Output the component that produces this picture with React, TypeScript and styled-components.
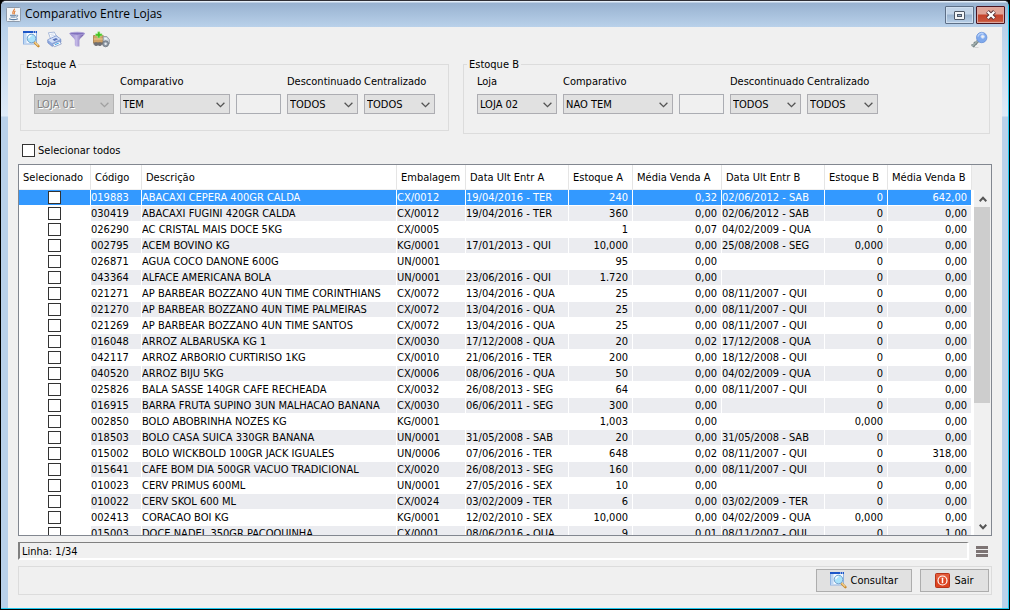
import React, { useId, useState } from 'react';
import styled, { createGlobalStyle, css } from 'styled-components';

const GlobalStyle = createGlobalStyle`
  *, *::before, *::after { box-sizing: border-box; }
  body {
    margin: 0;
    background: #000;
    font-family: "Tahoma", "DejaVu Sans Condensed", "Noto Sans", sans-serif;
    font-size: 11px;
    line-height: 13px;
    color: #000;
  }
  button, input, select { font: inherit; color: inherit; }
`;

const Window = styled.div`
  display: flex;
  flex-direction: column;
  height: 100vh;
  min-height: 400px;
  padding: 0 7px;
  border: 1px solid #000;
  border-top-color: #2f2f35;
  border-radius: 6px 6px 0 0;
  background: linear-gradient(#b9d1ea 27px, #dfebf8 115px, #b9d1ea 116px);
  box-shadow: inset -1px -1px 0 #1fc8ee;
  overflow: hidden;
`;

const TitleBar = styled.header`
  display: flex;
  align-items: flex-start;
  justify-content: space-between;
  height: 26px;
  flex: none;
  margin: 0 -6px 0 -7px;
  padding: 5px 3px 0 5px;
  background: linear-gradient(#e4eef8 1px, #98b2d0 2px, #b9d1ea 26px);
`;

const Title = styled.h1`
  display: flex;
  align-items: center;
  gap: 4px;
  margin: 0;
  font: 400 12px/16px "Open Sans", "Segoe UI", sans-serif;
`;

const WindowButtons = styled.div`
  display: flex;
  gap: 2px;
`;

const WindowButton = styled.button<{ $close?: boolean }>`
  display: grid;
  place-items: center;
  width: 29px;
  height: 18px;
  padding: 0;
  border: 1px solid ${p => (p.$close ? '#4b1420' : '#5d6f87')};
  border-radius: 1px;
  box-shadow: inset 0 0 0 1px ${p => (p.$close ? '#dda79f' : '#cfdff0')};
  background: ${p =>
    p.$close
      ? 'linear-gradient(#e0a396 0 7px, #c5432c 8px, #c8533b 14px, #d98a6c)'
      : 'linear-gradient(#c2d4e8 0 7px, #9ab3cf 8px, #b8cfe8)'};
`;

const Content = styled.main`
  display: flex;
  flex-direction: column;
  flex: 1;
  min-height: 0;
  margin-bottom: 1px;
  padding: 0 10px 13px;
  background: #f0f0f0;
`;

const Toolbar = styled.div`
  display: flex;
  align-items: flex-start;
  height: 31px;
  flex: none;
  gap: 7px;
  padding: 4px 4px 0 5px;
`;

const ToolButton = styled.button<{ $end?: boolean }>`
  display: block;
  padding: 0;
  border: 0;
  background: none;
  ${p => p.$end && css`margin-left: auto;`}
  svg { display: block; }
`;

const Filters = styled.div`
  display: flex;
  align-items: flex-start;
  gap: 14px;
  padding: 0 2px;
`;

const Group = styled.fieldset<{ $fill?: boolean }>`
  flex: ${p => (p.$fill ? '1' : 'none')};
  min-width: 0;
  margin: 0;
  padding: 4px 13px ${p => (p.$fill ? 19 : 16)}px;
  border: 1px solid #dcdcdc;
`;

const Legend = styled.legend`
  margin-left: -10px;
  padding: 0 2px;
`;

const Fields = styled.div`
  display: flex;
  align-items: flex-end;
  gap: 6px;
`;

const Field = styled.div<{ $width: number }>`
  display: flex;
  flex-direction: column;
  gap: 6px;
  width: ${p => p.$width}px;
`;

const FieldLabel = styled.label<{ $indent?: boolean }>`
  padding-left: ${p => (p.$indent ? 2 : 0)}px;
  white-space: nowrap;
`;

const SelectBox = styled.div`
  position: relative;
  svg {
    position: absolute;
    right: 5px;
    top: 8px;
    pointer-events: none;
  }
`;

const Select = styled.select`
  display: block;
  appearance: none;
  width: 100%;
  height: 20px;
  padding: 0 16px 0 2px;
  border: 1px solid #adadb2;
  border-radius: 0;
  background: #e1e1e1;
  &:disabled {
    border-color: #b4b4b4;
    background: #cccccc;
    color: #838383;
    text-shadow: 1px 1px 0 #fff;
    opacity: 1;
  }
`;

const TextInput = styled.input`
  width: 45px;
  height: 20px;
  padding: 0 2px;
  border: 1px solid #abadb3;
  background: #f0f0f0;
`;

const CheckBox = styled.input.attrs({ type: 'checkbox' })`
  appearance: none;
  display: block;
  width: 13px;
  height: 13px;
  margin: 0;
  border: 1px solid #333;
  background: #fff;
  &:checked { background: #333; box-shadow: inset 0 0 0 2px #fff; }
`;

const SelectAll = styled.label`
  display: flex;
  align-items: center;
  align-self: flex-start;
  gap: 3px;
  margin: 10px 0 7px 4px;
`;

const Panel = styled.div`
  display: flex;
  flex: 1;
  min-height: 0;
  border: 1px solid #828790;
  background: #fff;
`;

const TableClip = styled.div`
  flex: 1;
  min-width: 0;
  overflow: hidden;
`;

const Table = styled.table`
  width: 100%;
  table-layout: fixed;
  border-collapse: separate;
  border-spacing: 0;
`;

const HeadCell = styled.th`
  height: 25px;
  padding: 1px 0 0 4px;
  border-right: 1px solid #e5e5e5;
  border-bottom: 1px solid #f0f0f0;
  font-weight: 400;
  text-align: left;
  white-space: nowrap;
`;

const Row = styled.tr<{ $selected: boolean; $striped: boolean }>`
  color: ${p => (p.$selected ? '#fff' : '#000')};
  td { background: ${p => (p.$selected ? '#3399ff' : p.$striped ? '#ebecf0' : '#fff')}; }
  td:first-child { background: ${p => (p.$selected ? '#3399ff' : '#fff')}; }
`;

const Cell = styled.td<{ $number?: boolean }>`
  height: 16px;
  padding: 0 ${p => (p.$number ? 4 : 0)}px 0 0;
  border-right: 1px solid #fff;
  border-bottom: 1px solid #fff;
  text-align: ${p => (p.$number ? 'right' : 'left')};
  white-space: nowrap;
  overflow: hidden;
  ${CheckBox} { margin: 0 auto; }
`;

const ScrollSide = styled.div`
  display: flex;
  flex-direction: column;
  width: 19px;
  flex: none;
`;

const ScrollCorner = styled.div`
  height: 25px;
  background: #f0f0f0;
`;

const ScrollTrack = styled.div`
  display: flex;
  flex-direction: column;
  flex: 1;
  margin-left: 2px;
  background: #f0f0f0;
`;

const ScrollArrow = styled.button`
  display: grid;
  place-items: center;
  height: 17px;
  padding: 0;
  border: 0;
  background: none;
`;

const ScrollRange = styled.div`
  flex: 1;
`;

const ScrollThumb = styled.div`
  width: 16px;
  height: 63%;
  background: #cdcdcd;
`;

const StatusRow = styled.div`
  display: flex;
  align-items: center;
  gap: 7px;
  margin-top: 6px;
  padding-right: 4px;
`;

const StatusField = styled.div`
  flex: 1;
  height: 18px;
  padding: 2px 2px 0;
  border: 2px solid;
  border-color: #808080 #fff #fff #808080;
  border-top-width: 1px;
`;

const Footer = styled.footer`
  display: flex;
  justify-content: flex-end;
  gap: 8px;
  margin-top: 6px;
  padding: 2px;
  border: 1px solid #dcdcdc;
`;

const Action = styled.button`
  display: flex;
  align-items: center;
  justify-content: center;
  gap: 4px;
  min-width: 69px;
  height: 23px;
  padding: 0 13px;
  border: 1px solid #adadad;
  background: #e1e1e1;
`;

const Chevron = ({ dim }: { dim?: boolean }) => (
  <svg width="9" height="6" viewBox="0 0 9 6" fill="none" stroke={dim ? '#a0a0a0' : '#555'} strokeWidth="1.3">
    <path d="M.6 .8 4.5 4.7 8.4 .8" />
  </svg>
);

const ScrollGlyph = ({ down }: { down?: boolean }) => (
  <svg width="8" height="6" viewBox="0 0 8 6" fill="none" stroke="#555" strokeWidth="2">
    <path d={down ? 'M.7 .8 4 4.2 7.3 .8' : 'M.7 5.2 4 1.8 7.3 5.2'} />
  </svg>
);

const JavaIcon = () => (
  <svg width="15" height="15" viewBox="0 0 15 15">
    <rect x=".5" y=".5" width="14" height="14" rx="1" fill="#f2f5f8" stroke="#8d9aab" />
    <path d="M8.3 1.6C9.3 3.4 5.4 4.3 6.9 7.2M9.4 3.9C7.6 4.9 8.8 5.6 8 7.4" fill="none" stroke="#e2803a" strokeWidth="1.2" />
    <path d="M4 8.3h6M4.6 10h5M10.4 8.2c2-.5 1.6 1.6-.3 1.9" fill="none" stroke="#5b7ea3" />
    <path d="M3 11.8c2.4 1 6.5 1 9 0" fill="none" stroke="#5b7ea3" strokeWidth="1.2" />
  </svg>
);

const SearchIcon = () => (
  <svg width="17" height="17" viewBox="0 0 17 17">
    <rect x=".5" y=".5" width="13" height="12.500" fill="#f3f8fe" stroke="#8fb2e2" />
    <path d="M0 0h14v2H0z" fill="#1d57c8" />
    <path d="M10 .6h1v1h-1zM12 .6h1v1h-1z" fill="#fff" />
    <path d="M1 2h2.500v10.500H1z" fill="#bcd6f4" />
    <path d="M11.600 11.300 15.400 15.200" stroke="#c98a2e" strokeWidth="2.400" strokeLinecap="round" />
    <path d="M11.600 11 15.200 14.600" stroke="#f6d796" strokeWidth="1.100" />
    <circle cx="8.500" cy="7.500" r="4.300" fill="#a9e2fa" stroke="#6f9fcb" />
    <path d="M5.800 7.300a2.700 2.700 0 0 1 2.700-2.600" fill="none" stroke="#fff" strokeWidth="1.300" />
  </svg>
);

const PrinterIcon = () => (
  <svg width="15" height="17" viewBox="0 0 16 17">
    <path d="M1.500 1.300 7.800 .6 10.800 6.500 4 8.200z" fill="#fff" stroke="#8fa6cf" strokeWidth=".8" />
    <path d="M3.500 3 7.300 2.500M4.300 4.800 8.300 4.200" stroke="#b9cbe8" strokeWidth=".8" />
    <path d="M.8 8.800 9.800 4.600 14.600 8 14.800 11.300 5.500 15.800 .9 12z" fill="#8faae0" stroke="#6a85c4" strokeWidth=".8" />
    <path d="M.9 8.900 9.800 4.900 14.400 8 5.400 12.200z" fill="#d5e1f8" />
    <path d="M5.800 8.500 9.600 6.800 11.800 8.300 7.900 10z" fill="#5873bb" />
    <path d="M6 13.500 13 10.400 15.300 13.200 8 16.200z" fill="#fff" stroke="#7d93c2" strokeWidth=".8" />
    <path d="M8.300 14 12.600 12.200" stroke="#44a6e8" strokeWidth="1.200" />
  </svg>
);

const FunnelIcon = () => (
  <svg width="17" height="17" viewBox="0 0 17 17">
    <defs>
      <linearGradient id="funnel" x1="0" x2="1">
        <stop offset="0" stopColor="#8d7cc6" />
        <stop offset=".45" stopColor="#c3b8e6" />
        <stop offset="1" stopColor="#5f4a9e" />
      </linearGradient>
    </defs>
    <path d="M.6 2.500C1.800 5 5.200 7.200 5.800 9v5.200L7 15.400h3.400V9c.7-1.800 4.200-4 5.400-6.500z" fill="url(#funnel)" />
    <ellipse cx="8.200" cy="2.600" rx="7.600" ry="1.400" fill="#8170bd" stroke="#b3a8dc" strokeWidth=".8" />
  </svg>
);

const TruckIcon = () => (
  <svg width="17" height="17" viewBox="0 0 17 17">
    <path d="M.5 4.500h9.700v7.500H.5z" fill="#cfa165" stroke="#a57b45" strokeWidth=".8" />
    <path d="M.8 8h9.200" stroke="#eccb93" />
    <path d="M10.200 5.500h3.600l2.600 3v4.200h-6.200z" fill="#c9d1da" stroke="#8b949f" strokeWidth=".8" />
    <path d="M11.300 6.700h1.900l1.500 1.900h-3.400z" fill="#eef5fb" />
    <path d="M.5 11.500h11v2H.5z" fill="#7a6f64" />
    <circle cx="3.200" cy="13.200" r="1.900" fill="#6f6f74" />
    <circle cx="6.800" cy="13.200" r="1.900" fill="#6f6f74" />
    <circle cx="12.600" cy="12.800" r="3" fill="#8d97a3" stroke="#6d757e" strokeWidth=".8" />
    <circle cx="12.600" cy="12.800" r="1.200" fill="#e6eaee" />
    <path d="M4.700 .8h2.200v2h2.200v2.100H6.900v2H4.700v-2H2.500V2.800h2.200z" fill="#3fc11d" stroke="#b5efa2" strokeWidth=".5" />
  </svg>
);

const KeyIcon = () => (
  <svg width="18" height="18" viewBox="0 0 18 18">
    <path d="M9.500 8.500 2.500 15.500" stroke="#7c8a8b" strokeWidth="3" />
    <path d="M1.500 13.500 4.500 16M4 11 6.500 13.800" stroke="#7c8a8b" strokeWidth="1.500" />
    <path d="M9 8.500 2 15.500" stroke="#c3cccc" strokeWidth=".9" />
    <path d="M4.500 16.500h4" stroke="#d4d4d4" />
    <circle cx="11.700" cy="6.500" r="5.200" fill="#7fa9ec" stroke="#6790d8" strokeWidth=".8" />
    <path d="M7.900 5.600a4 4 0 0 1 5.600-2.900" fill="none" stroke="#b4cff9" strokeWidth="1.400" />
    <circle cx="12.700" cy="5.600" r="1.700" fill="#f0f0f0" stroke="#c4d8fa" strokeWidth=".9" />
  </svg>
);

const PowerIcon = () => (
  <svg width="15" height="15" viewBox="0 0 15 15">
    <rect x=".5" y=".5" width="14" height="14" rx="1" fill="#dd431f" stroke="#b5341a" />
    <path d="M1 1h13v5H1z" fill="#ea6a49" opacity=".6" />
    <circle cx="7.500" cy="7.500" r="4.500" fill="none" stroke="#fff" strokeWidth="1.200" />
    <path d="M7.500 4.800v5.400" stroke="#fff" strokeWidth="1.500" />
  </svg>
);

const MenuIcon = () => (
  <svg width="12" height="11" viewBox="0 0 12 11" fill="#7d7474">
    <path d="M0 0h12v3H0zM0 4h12v3H0zM0 8h12v3H0z" />
  </svg>
);

const RestoreGlyph = () => (
  <svg width="11" height="9" viewBox="0 0 11 9">
    <rect x=".5" y=".5" width="10" height="8" rx=".5" fill="#f4f6f8" stroke="#4d5766" />
    <rect x="3.500" y="3.500" width="4" height="2" fill="#9db4cd" stroke="#4d5766" />
  </svg>
);

const CloseGlyph = () => (
  <svg width="12" height="10" viewBox="0 0 12 10" fill="none">
    <path d="M2.500 1.500 9.500 8.500M9.500 1.500 2.500 8.500" stroke="#5a3438" strokeWidth="4" />
    <path d="M2.700 1.700 9.300 8.300M9.300 1.700 2.700 8.300" stroke="#fff" strokeWidth="2.200" />
  </svg>
);

function Combo({ label, width, value, disabled, indent }: {
  label: string; width: number; value: string; disabled?: boolean; indent?: boolean;
}) {
  const id = useId();
  return (
    <Field $width={width}>
      <FieldLabel htmlFor={id} $indent={indent}>{label}</FieldLabel>
      <SelectBox>
        <Select id={id} disabled={disabled} defaultValue={value}>
          <option>{value}</option>
        </Select>
        <Chevron dim={disabled} />
      </SelectBox>
    </Field>
  );
}

function StockFilter({ title, store, compare, locked, fill }: {
  title: string; store: string; compare: string; locked?: boolean; fill?: boolean;
}) {
  return (
    <Group $fill={fill}>
      <Legend>{title}</Legend>
      <Fields>
        <Combo label="Loja" width={80} value={store} disabled={locked} indent={locked} />
        <Combo label="Comparativo" width={110} value={compare} />
        <TextInput type="text" disabled aria-label={`Quantidade ${title}`} />
        <Combo label="Descontinuado" width={71} value="TODOS" />
        <Combo label="Centralizado" width={71} value="TODOS" />
      </Fields>
    </Group>
  );
}

const columns: [string, number | undefined][] = [
  ['Selecionado', 72],
  ['Código', 51],
  ['Descrição', undefined],
  ['Embalagem', 69],
  ['Data Ult Entr A', 103],
  ['Estoque A', 64],
  ['Média Venda A', 89],
  ['Data Ult Entr B', 103],
  ['Estoque B', 63],
  ['Média Venda B', 84],
];

const products: string[][] = [
  ['019883', 'ABACAXI CEPERA 400GR CALDA', 'CX/0012', '19/04/2016 - TER', '240', '0,32', '02/06/2012 - SAB', '0', '642,00'],
  ['030419', 'ABACAXI FUGINI 420GR CALDA', 'CX/0012', '19/04/2016 - TER', '360', '0,00', '02/06/2012 - SAB', '0', '0,00'],
  ['026290', 'AC CRISTAL MAIS DOCE 5KG', 'CX/0005', '', '1', '0,07', '04/02/2009 - QUA', '0', '0,00'],
  ['002795', 'ACEM BOVINO KG', 'KG/0001', '17/01/2013 - QUI', '10,000', '0,00', '25/08/2008 - SEG', '0,000', '0,00'],
  ['026871', 'AGUA COCO DANONE 600G', 'UN/0001', '', '95', '0,00', '', '0', '0,00'],
  ['043364', 'ALFACE AMERICANA BOLA', 'UN/0001', '23/06/2016 - QUI', '1.720', '0,00', '', '0', '0,00'],
  ['021271', 'AP BARBEAR BOZZANO 4UN TIME CORINTHIANS', 'CX/0072', '13/04/2016 - QUA', '25', '0,00', '08/11/2007 - QUI', '0', '0,00'],
  ['021270', 'AP BARBEAR BOZZANO 4UN TIME PALMEIRAS', 'CX/0072', '13/04/2016 - QUA', '25', '0,00', '08/11/2007 - QUI', '0', '0,00'],
  ['021269', 'AP BARBEAR BOZZANO 4UN TIME SANTOS', 'CX/0072', '13/04/2016 - QUA', '25', '0,00', '08/11/2007 - QUI', '0', '0,00'],
  ['016048', 'ARROZ ALBARUSKA KG 1', 'CX/0030', '17/12/2008 - QUA', '20', '0,02', '17/12/2008 - QUA', '0', '0,00'],
  ['042117', 'ARROZ ARBORIO CURTIRISO 1KG', 'CX/0010', '21/06/2016 - TER', '200', '0,00', '18/12/2008 - QUI', '0', '0,00'],
  ['040520', 'ARROZ BIJU 5KG', 'CX/0006', '08/06/2016 - QUA', '50', '0,00', '04/02/2009 - QUA', '0', '0,00'],
  ['025826', 'BALA SASSE 140GR CAFE RECHEADA', 'CX/0032', '26/08/2013 - SEG', '64', '0,00', '08/11/2007 - QUI', '0', '0,00'],
  ['016915', 'BARRA FRUTA SUPINO 3UN MALHACAO BANANA', 'CX/0030', '06/06/2011 - SEG', '300', '0,00', '', '0', '0,00'],
  ['002850', 'BOLO ABOBRINHA NOZES KG', 'KG/0001', '', '1,003', '0,00', '', '0,000', '0,00'],
  ['018503', 'BOLO CASA SUICA 330GR BANANA', 'UN/0001', '31/05/2008 - SAB', '20', '0,00', '31/05/2008 - SAB', '0', '0,00'],
  ['015002', 'BOLO WICKBOLD 100GR JACK IGUALES', 'UN/0006', '07/06/2016 - TER', '648', '0,02', '08/11/2007 - QUI', '0', '318,00'],
  ['015641', 'CAFE BOM DIA 500GR VACUO TRADICIONAL', 'CX/0020', '26/08/2013 - SEG', '160', '0,00', '08/11/2007 - QUI', '0', '0,00'],
  ['010023', 'CERV PRIMUS 600ML', 'UN/0001', '27/05/2016 - SEX', '10', '0,00', '', '0', '0,00'],
  ['010022', 'CERV SKOL 600 ML', 'CX/0024', '03/02/2009 - TER', '6', '0,00', '03/02/2009 - TER', '0', '0,00'],
  ['002413', 'CORACAO BOI KG', 'KG/0001', '12/02/2010 - SEX', '10,000', '0,00', '04/02/2009 - QUA', '0,000', '0,00'],
  ['015003', 'DOCE NADEL 350GR PACOQUINHA', 'CX/0001', '08/06/2016 - QUA', '9', '0,01', '08/11/2007 - QUI', '0', '1,00'],
];

const numeric = new Set([4, 5, 7, 8]);

export default function App() {
  const [current, setCurrent] = useState(0);
  return (
    <>
      <GlobalStyle />
      <Window>
        <TitleBar>
          <Title><JavaIcon />Comparativo Entre Lojas</Title>
          <WindowButtons>
            <WindowButton aria-label="Restaurar"><RestoreGlyph /></WindowButton>
            <WindowButton $close aria-label="Fechar"><CloseGlyph /></WindowButton>
          </WindowButtons>
        </TitleBar>
        <Content>
          <Toolbar>
            <ToolButton aria-label="Consultar"><SearchIcon /></ToolButton>
            <ToolButton aria-label="Imprimir"><PrinterIcon /></ToolButton>
            <ToolButton aria-label="Filtrar"><FunnelIcon /></ToolButton>
            <ToolButton aria-label="Transferir"><TruckIcon /></ToolButton>
            <ToolButton aria-label="Permissões" $end><KeyIcon /></ToolButton>
          </Toolbar>
          <Filters>
            <StockFilter title="Estoque A" store="LOJA 01" compare="TEM" locked />
            <StockFilter title="Estoque B" store="LOJA 02" compare="NAO TEM" fill />
          </Filters>
          <SelectAll><CheckBox />Selecionar todos</SelectAll>
          <Panel>
            <TableClip>
              <Table>
                <colgroup>
                  {columns.map(([name, width]) => <col key={name} width={width} />)}
                </colgroup>
                <thead>
                  <tr>{columns.map(([name]) => <HeadCell key={name} scope="col">{name}</HeadCell>)}</tr>
                </thead>
                <tbody>
                  {products.map((product, r) => (
                    <Row key={product[0]} $selected={r === current} $striped={r % 2 === 1} onClick={() => setCurrent(r)}>
                      <Cell><CheckBox aria-label={`Selecionar ${product[0]}`} /></Cell>
                      {product.map((value, c) => <Cell key={c} $number={numeric.has(c)}>{value}</Cell>)}
                    </Row>
                  ))}
                </tbody>
              </Table>
            </TableClip>
            <ScrollSide>
              <ScrollCorner />
              <ScrollTrack>
                <ScrollArrow aria-label="Rolar para cima"><ScrollGlyph /></ScrollArrow>
                <ScrollRange><ScrollThumb /></ScrollRange>
                <ScrollArrow aria-label="Rolar para baixo"><ScrollGlyph down /></ScrollArrow>
              </ScrollTrack>
            </ScrollSide>
          </Panel>
          <StatusRow>
            <StatusField>Linha: {current + 1}/34</StatusField>
            <ToolButton aria-label="Menu"><MenuIcon /></ToolButton>
          </StatusRow>
          <Footer>
            <Action><SearchIcon />Consultar</Action>
            <Action><PowerIcon />Sair</Action>
          </Footer>
        </Content>
      </Window>
    </>
  );
}
